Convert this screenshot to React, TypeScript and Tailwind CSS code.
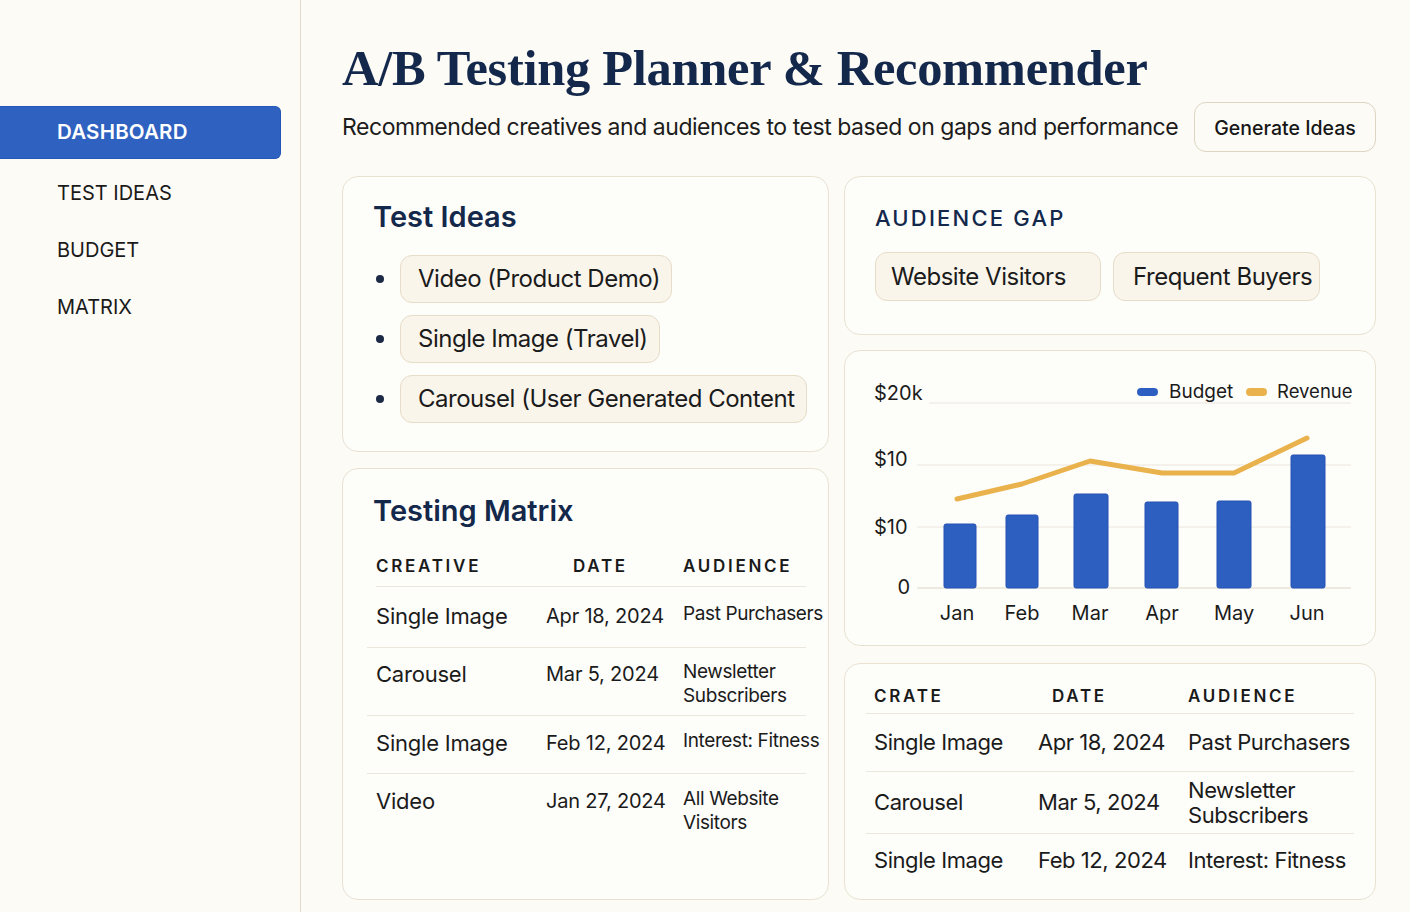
import React from "react";

const sans = "font-['Inter','Liberation_Sans',sans-serif]";

const navItems = ["TEST IDEAS", "BUDGET", "MATRIX"];

const ideas = ["Video (Product Demo)", "Single Image (Travel)", "Carousel (User Generated Content"];

const matrixRows = [
  { creative: "Single Image", date: "Apr 18, 2024", audience: ["Past Purchasers"], h: "h-[61px]", pt: "pt-[15px]" },
  { creative: "Carousel", date: "Mar 5, 2024", audience: ["Newsletter", "Subscribers"], h: "h-[68px]", pt: "pt-[12px]" },
  { creative: "Single Image", date: "Feb 12, 2024", audience: ["Interest: Fitness"], h: "h-[58px]", pt: "pt-[13px]" },
  { creative: "Video", date: "Jan 27, 2024", audience: ["All Website", "Visitors"], h: "h-[70px]", pt: "pt-[13px]" },
];

const sideRows = [
  { creative: "Single Image", date: "Apr 18, 2024", audience: ["Past Purchasers"], h: "h-[58px]" },
  { creative: "Carousel", date: "Mar 5, 2024", audience: ["Newsletter", "Subscribers"], h: "h-[62px]" },
  { creative: "Single Image", date: "Feb 12, 2024", audience: ["Interest: Fitness"], h: "h-[52px]" },
];

const months = [
  { m: "Jan", x: 112, bx: 99, bw: 32, top: 173, ly: 148 },
  { m: "Feb", x: 177, bx: 161, bw: 32, top: 164, ly: 133 },
  { m: "Mar", x: 245, bx: 229, bw: 34, top: 143, ly: 110 },
  { m: "Apr", x: 317, bx: 300, bw: 33, top: 151, ly: 122 },
  { m: "May", x: 389, bx: 372, bw: 34, top: 150, ly: 122 },
  { m: "Jun", x: 462, bx: 446, bw: 34, top: 104, ly: 87 },
];

function Card({ className, children }: { className?: string; children: React.ReactNode }) {
  return (
    <div className={`rounded-2xl border border-[#e9e2d1] bg-[#fdfdfa] ${className ?? ""}`}>{children}</div>
  );
}

function Pill({ children, className }: { children: React.ReactNode; className?: string }) {
  return (
    <div
      className={`flex items-center rounded-xl border border-[#e6dcc7] bg-[#f9f5eb] text-[24px] tracking-[-0.02em] text-[#1b1b1b] whitespace-nowrap ${className ?? ""}`}
    >
      {children}
    </div>
  );
}

function Chart() {
  const line = months.map((p) => `${p.x},${p.ly}`).join(" ");
  return (
    <svg width="532" height="295" viewBox="0 0 532 295" className={sans}>
      <g stroke="#ebe6da" strokeWidth="1">
        <line x1="84" y1="52" x2="506" y2="52" />
        <line x1="72" y1="114" x2="506" y2="114" />
        <line x1="72" y1="176" x2="506" y2="176" />
        <line x1="72" y1="237" x2="506" y2="237" stroke="#ddd6c6" />
      </g>
      <g fill="#1b1b1b" fontSize="20">
        <text x="29" y="49">$20k</text>
        <text x="29" y="115">$10</text>
        <text x="29" y="183">$10</text>
        <text x="65" y="243" textAnchor="end">0</text>
      </g>
      <rect x="292" y="37" width="21" height="8" rx="4" fill="#2c5fc1" />
      <text x="324" y="47" fontSize="19" fill="#1b1b1b">Budget</text>
      <rect x="401" y="37" width="21" height="8" rx="4" fill="#e9b24c" />
      <text x="432" y="47" fontSize="18.5" fill="#1b1b1b">Revenue</text>
      {months.map((p) => (
        <rect
          key={p.m}
          x={p.bx}
          y={p.top}
          width={p.bw}
          height={237 - p.top}
          rx="2"
          fill="#2d5fc0"
          stroke="#2452b3"
          strokeWidth="1"
        />
      ))}
      <polyline points={line} fill="none" stroke="#e9b24c" strokeWidth="5" strokeLinejoin="round" strokeLinecap="round" />
      <g fill="#1b1b1b" fontSize="20" textAnchor="middle">
        {months.map((p) => (
          <text key={p.m} x={p.x} y="269">
            {p.m}
          </text>
        ))}
      </g>
    </svg>
  );
}

export default function App() {
  return (
    <div className={`w-[1410px] h-[912px] flex bg-[#fcfbf6] overflow-hidden ${sans}`}>
      <aside className="w-[301px] shrink-0 border-r border-[#e2dac8] pt-[106px] pr-[19px]">
        <div className="h-[53px] flex items-center pl-[57px] bg-[#2e61c0] border border-[#2456b5] border-l-0 rounded-r-md text-white text-[20.5px] font-semibold tracking-[0.01em]">
          DASHBOARD
        </div>
        <nav className="mt-[5px] flex flex-col">
          {navItems.map((item) => (
            <div key={item} className="h-[57px] flex items-center pl-[57px] text-[20px] text-[#1a1a1a]">
              {item}
            </div>
          ))}
        </nav>
      </aside>

      <main className="flex-1 pl-[41px] pr-[34px] pt-[38px]">
        <h1 className="font-['Liberation_Serif',serif] font-bold text-[50.5px] leading-[60px] text-[#13284a] tracking-[-0.3px]">
          A/B Testing Planner &amp; Recommender
        </h1>
        <div className="flex items-center justify-between mt-[4px]">
          <p className="text-[23px] tracking-[-0.02em] whitespace-nowrap text-[#1c1c1c] leading-[32px]">
            Recommended creatives and audiences to test based on gaps and performance
          </p>
          <button className="h-[50px] w-[182px] shrink-0 rounded-xl border border-[#ddd4c1] bg-[#fcfbf6] pt-[3px] text-[19.5px] font-medium text-[#161616]">
            Generate Ideas
          </button>
        </div>

        <div className="grid grid-cols-[487px_532px] gap-x-[15px] mt-[24px]">
          <div className="flex flex-col gap-[16px]">
            <Card className="h-[276px] px-[30px] pt-[22px]">
              <h2 className="text-[29px] font-semibold text-[#13284a] leading-[36px]">Test Ideas</h2>
              <ul className="mt-[20px] flex flex-col gap-[12px]">
                {ideas.map((idea) => (
                  <li key={idea} className="flex items-center">
                    <span className="shrink-0 w-[8px] h-[8px] rounded-full bg-[#1d2a45] ml-[3px] mr-[16px]" />
                    <Pill className="h-[48px] pl-[17px] pr-[11px]">{idea}</Pill>
                  </li>
                ))}
              </ul>
            </Card>

            <Card className="h-[432px] pt-[24px]">
              <h2 className="px-[30px] text-[29px] font-semibold text-[#13284a] leading-[36px]">Testing Matrix</h2>
              <div className="mt-[18px] ml-[24px] mr-[22px]">
                <div className="grid grid-cols-[170px_137px_1fr] items-center h-[40px] border-b border-[#ece7dc] ml-[9px] text-[17px] font-semibold tracking-[0.16em] text-[#1a1a1a]">
                  <span>CREATIVE</span>
                  <span className="pl-[27px]">DATE</span>
                  <span>AUDIENCE</span>
                </div>
                {matrixRows.map((r, i) => (
                  <div
                    key={i}
                    className={`grid grid-cols-[179px_137px_1fr] items-start ${r.h} ${r.pt} ${
                      i < 3 ? "border-b border-[#ece7dc]" : ""
                    }`}
                  >
                    <span className="pl-[9px] text-[22px] leading-[28px] tracking-[-0.01em] text-[#1b1b1b]">{r.creative}</span>
                    <span className="text-[20px] leading-[28px] tracking-[-0.01em] text-[#1b1b1b] whitespace-nowrap">{r.date}</span>
                    <span className="text-[19px] leading-[24px] tracking-[-0.02em] text-[#1b1b1b] whitespace-nowrap">
                      {r.audience.map((a) => (
                        <div key={a}>{a}</div>
                      ))}
                    </span>
                  </div>
                ))}
              </div>
            </Card>
          </div>

          <div className="flex flex-col">
            <Card className="h-[159px] px-[30px] pt-[27px]">
              <h3 className="text-[22px] font-medium tracking-[0.1em] text-[#13284a] leading-[28px]">AUDIENCE GAP</h3>
              <div className="mt-[20px] flex gap-[12px]">
                <Pill className="h-[49px] w-[226px] px-[15px]">Website Visitors</Pill>
                <Pill className="h-[49px] w-[207px] px-[19px]">Frequent Buyers</Pill>
              </div>
            </Card>
            <Card className="h-[296px] mt-[15px] overflow-hidden">
              <Chart />
            </Card>
            <Card className="h-[237px] mt-[17px] px-[21px] pt-[16px]">
              <div className="grid grid-cols-[172px_150px_1fr] items-center h-[34px] border-b border-[#ece7dc] text-[17px] font-semibold tracking-[0.16em] text-[#1a1a1a]">
                <span className="pl-[8px]">CRATE</span>
                <span className="pl-[14px]">DATE</span>
                <span>AUDIENCE</span>
              </div>
              {sideRows.map((r, i) => (
                <div
                  key={i}
                  className={`grid grid-cols-[172px_150px_1fr] items-center ${r.h} ${
                    i < 2 ? "border-b border-[#ece7dc]" : ""
                  } text-[22px] leading-[25px] tracking-[-0.02em] text-[#1b1b1b]`}
                >
                  <span className="pl-[8px]">{r.creative}</span>
                  <span className="whitespace-nowrap">{r.date}</span>
                  <span className="whitespace-nowrap">
                    {r.audience.map((a) => (
                      <div key={a}>{a}</div>
                    ))}
                  </span>
                </div>
              ))}
            </Card>
          </div>
        </div>
      </main>
    </div>
  );
}
